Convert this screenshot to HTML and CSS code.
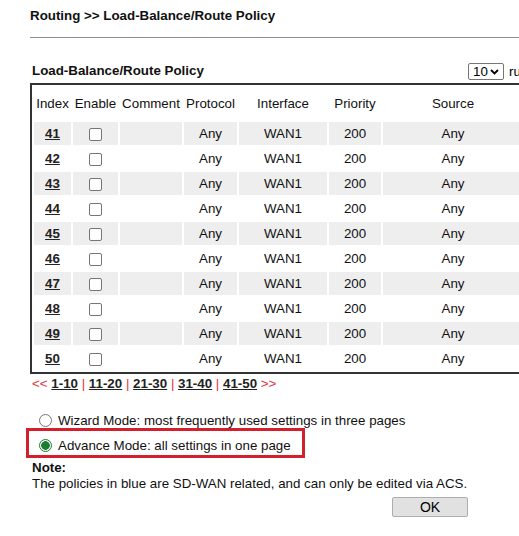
FILE: index.html
```html
<!DOCTYPE html>
<html>
<head>
<meta charset="utf-8">
<title>Load-Balance/Route Policy</title>
<link rel="stylesheet" href="styles.css">
</head>
<body>
<div class="page">
  <h1 class="title">Routing &gt;&gt; Load-Balance/Route Policy</h1>
  <hr class="rule">
  <div class="bar">
    <div class="subtitle">Load-Balance/Route Policy</div>
    <span class="select-wrap">
      <select class="per-page"><option>10</option></select>
      <svg class="chev" width="9" height="6" viewBox="0 0 9 6"><path d="M1 1 L4.5 4.5 L8 1" fill="none" stroke="#000" stroke-width="1.8"/></svg>
    </span>
    <span class="per-label">rules per page</span>
  </div>
  <table class="grid">
    <colgroup>
      <col class="c-index"><col class="c-enable"><col class="c-comment"><col class="c-proto"><col class="c-iface"><col class="c-prio"><col class="c-src">
    </colgroup>
    <thead>
      <tr><th>Index</th><th>Enable</th><th>Comment</th><th>Protocol</th><th>Interface</th><th>Priority</th><th>Source</th></tr>
    </thead>
    <tbody>
      <tr class="shade"><td><a href="#">41</a></td><td><input type="checkbox" class="cb"></td><td></td><td>Any</td><td>WAN1</td><td>200</td><td>Any</td></tr>
      <tr><td><a href="#">42</a></td><td><input type="checkbox" class="cb"></td><td></td><td>Any</td><td>WAN1</td><td>200</td><td>Any</td></tr>
      <tr class="shade"><td><a href="#">43</a></td><td><input type="checkbox" class="cb"></td><td></td><td>Any</td><td>WAN1</td><td>200</td><td>Any</td></tr>
      <tr><td><a href="#">44</a></td><td><input type="checkbox" class="cb"></td><td></td><td>Any</td><td>WAN1</td><td>200</td><td>Any</td></tr>
      <tr class="shade"><td><a href="#">45</a></td><td><input type="checkbox" class="cb"></td><td></td><td>Any</td><td>WAN1</td><td>200</td><td>Any</td></tr>
      <tr><td><a href="#">46</a></td><td><input type="checkbox" class="cb"></td><td></td><td>Any</td><td>WAN1</td><td>200</td><td>Any</td></tr>
      <tr class="shade"><td><a href="#">47</a></td><td><input type="checkbox" class="cb"></td><td></td><td>Any</td><td>WAN1</td><td>200</td><td>Any</td></tr>
      <tr><td><a href="#">48</a></td><td><input type="checkbox" class="cb"></td><td></td><td>Any</td><td>WAN1</td><td>200</td><td>Any</td></tr>
      <tr class="shade"><td><a href="#">49</a></td><td><input type="checkbox" class="cb"></td><td></td><td>Any</td><td>WAN1</td><td>200</td><td>Any</td></tr>
      <tr><td><a href="#">50</a></td><td><input type="checkbox" class="cb"></td><td></td><td>Any</td><td>WAN1</td><td>200</td><td>Any</td></tr>
    </tbody>
  </table>
  <div class="pages"><span class="red">&lt;&lt;</span> <a href="#">1-10</a> <span class="red">|</span> <a href="#">11-20</a> <span class="red">|</span> <a href="#">21-30</a> <span class="red">|</span> <a href="#">31-40</a> <span class="red">|</span> <a href="#">41-50</a> <span class="red">&gt;&gt;</span></div>
  <div class="modes">
    <label class="mode wizard"><input type="radio" name="mode" class="rd">Wizard Mode: most frequently used settings in three pages</label>
    <div class="highlight">
      <label class="mode"><input type="radio" name="mode" class="rd" checked>Advance Mode: all settings in one page</label>
    </div>
  </div>
  <div class="note">
    <div class="note-title">Note:</div>
    <div class="note-text">The policies in blue are SD-WAN related, and can only be edited via ACS.</div>
  </div>
  <div class="actions"><button class="ok" type="button">OK</button></div>
</div>
</body>
</html>
```

FILE: styles.css
```css
html, body {
  margin: 0;
  padding: 0;
  background: #fff;
  overflow: hidden;
}
body {
  width: 519px;
  height: 536px;
  font-family: "Liberation Sans", Arial, sans-serif;
  font-size: 13.33px;
  color: #000;
}
.page {
  width: 640px;
  padding: 8px 0 0 30px;
}
.title {
  margin: 0;
  font-size: 13.33px;
  font-weight: bold;
  line-height: 16px;
  color: #111;
}
.rule {
  border: 0;
  border-top: 1px solid #8c8c8c;
  height: 0;
  margin: 13px 0 0 0;
}
.bar {
  display: grid;
  grid-template-columns: 436px 36px auto;
  align-items: center;
  margin-top: 25px;
  padding-left: 2px;
  height: 17px;
}
.subtitle {
  font-weight: bold;
  line-height: 16px;
  color: #111;
  margin-top: -2px;
}
.select-wrap {
  position: relative;
  display: block;
  width: 36px;
  height: 17px;
}
.per-page {
  appearance: none;
  -webkit-appearance: none;
  box-sizing: border-box;
  width: 36px;
  height: 17px;
  margin: 0;
  padding: 0 0 0 4px;
  border: 1px solid #767676;
  border-radius: 2px;
  background: #fff;
  font-family: "Liberation Sans", Arial, sans-serif;
  font-size: 13.33px;
  line-height: 15px;
  color: #000;
}
.chev {
  position: absolute;
  right: 5px;
  top: 6px;
  pointer-events: none;
}
.per-label {
  margin-left: 5px;
  white-space: nowrap;
  line-height: 16px;
}
.grid {
  margin-top: 3px;
  border: 2px solid #333;
  border-collapse: separate;
  border-spacing: 2px;
  table-layout: fixed;
  width: 497px;
}
.c-index { width: 37px; }
.c-enable { width: 45px; }
.c-comment { width: 62px; }
.c-proto { width: 53px; }
.c-iface { width: 88px; }
.c-prio { width: 52px; }
.c-src { width: 140px; }
.grid th {
  height: 33px;
  padding: 0;
  font-weight: normal;
  line-height: 15px;
  text-align: center;
  color: #111;
  white-space: nowrap;
}
.grid td {
  height: 23px;
  padding: 0;
  line-height: 15px;
  text-align: center;
  color: #111;
  vertical-align: middle;
}
.grid tr.shade td {
  background: #eeeeee;
}
.grid a,
.pages a {
  color: #222;
  font-weight: bold;
  text-decoration: underline;
}
.cb {
  appearance: none;
  -webkit-appearance: none;
  box-sizing: border-box;
  width: 13px;
  height: 13px;
  margin: 0;
  border: 1px solid #767676;
  border-radius: 2px;
  background: #fff;
  vertical-align: middle;
  display: inline-block;
}
.pages {
  margin-top: 2px;
  padding-left: 2px;
  line-height: 15px;
  white-space: nowrap;
}
.red {
  color: #e2323c;
}
.modes {
  margin-top: 22px;
}
.mode {
  display: flex;
  align-items: center;
  line-height: 15px;
  white-space: nowrap;
  color: #111;
}
.wizard {
  height: 15px;
  padding-left: 9px;
}
.rd {
  appearance: none;
  -webkit-appearance: none;
  box-sizing: border-box;
  width: 13px;
  height: 13px;
  margin: 0 6px 0 0;
  border: 1px solid #767676;
  border-radius: 50%;
  background: #fff;
  flex: none;
}
.rd:checked {
  border-color: #1a7d32;
  background: radial-gradient(circle, #1a7d32 0 4px, #fff 4.6px);
}
.highlight {
  box-sizing: border-box;
  width: 279px;
  height: 30px;
  margin-left: -4px;
  border: 3px solid #d4202c;
  padding: 5px 0 0 10px;
}
.highlight .mode {
  height: 18px;
}
.note {
  margin-top: 2px;
  padding-left: 2px;
  line-height: 16px;
  color: #111;
}
.note-title {
  font-weight: bold;
}
.actions {
  margin-top: 5px;
  padding-left: 362px;
}
.ok {
  box-sizing: border-box;
  width: 76px;
  height: 20px;
  margin: 0;
  padding: 0;
  border: 1px solid #adadad;
  border-radius: 2px;
  background: #e1e1e1;
  font-family: "Liberation Sans", Arial, sans-serif;
  font-size: 14px;
  line-height: 18px;
  color: #000;
}
```
